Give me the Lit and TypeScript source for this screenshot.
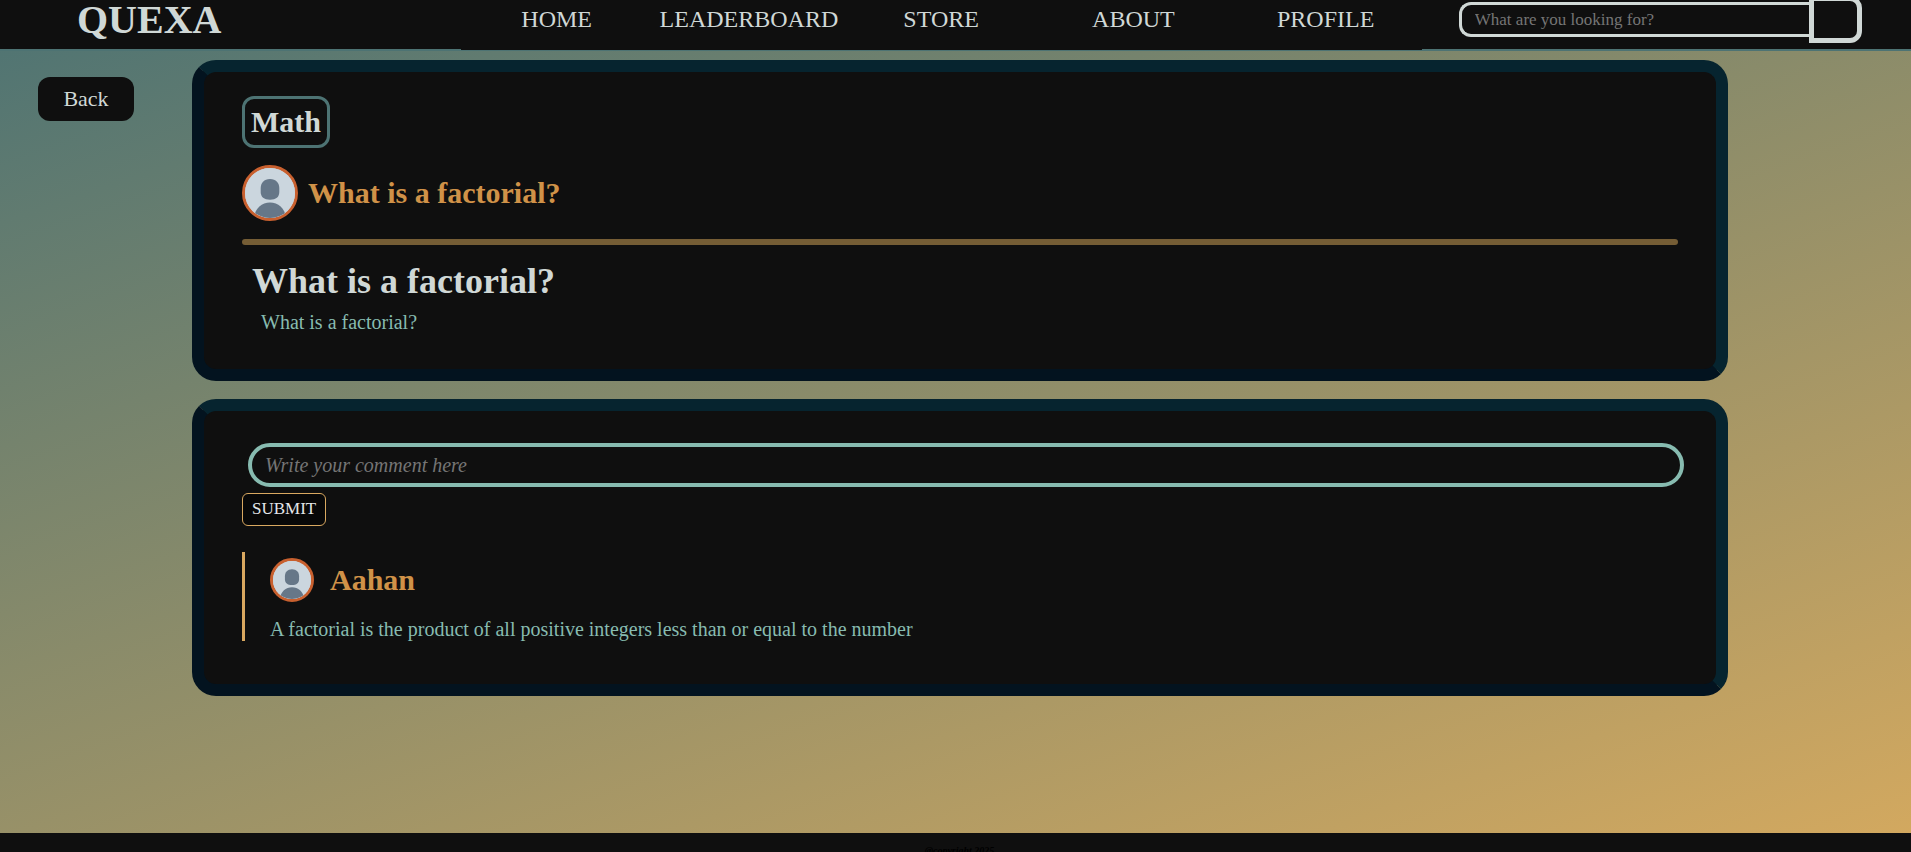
import { LitElement, html, css } from "lit";
import { customElement, property } from "lit/decorators.js";

@customElement("user-avatar")
class UserAvatar extends LitElement {
  static styles = css`
    :host {
      display: block;
      flex: none;
      box-sizing: border-box;
      border: 3px solid #c8602f;
      border-radius: 50%;
      overflow: hidden;
      background: #cbd6de;
    }
    svg {
      display: block;
      width: 100%;
      height: 100%;
    }
  `;

  render() {
    return html`
      <svg viewBox="0 0 50 50" role="img" aria-label="Profile picture">
        <rect width="50" height="50" fill="#cbd6de" />
        <path
          d="M25 11C31 11 34.3 15 34.3 20V24C34.3 29 31 31.7 25 31.7S15.7 29 15.7 24V20C15.7 15 19 11 25 11Z"
          fill="#667788"
        />
        <path d="M9 50C10 40 17 34.5 25 34.5S40 40 41 50Z" fill="#667788" />
      </svg>
    `;
  }
}

@customElement("site-header")
class SiteHeader extends LitElement {
  @property({ attribute: false }) links: string[] = [];

  static styles = css`
    :host {
      display: block;
    }
    .bar {
      display: grid;
      grid-template-columns: 24.1% 50.3% 1fr;
      height: 49px;
      background: #0f0f0f;
      border-bottom: 2px solid #4d7373;
    }
    .logo {
      margin: 0;
      padding-left: 77px;
      font-size: 40px;
      line-height: 40px;
      font-weight: bold;
    }
    .nav {
      display: grid;
      grid-auto-flow: column;
      grid-auto-columns: 1fr;
      height: 50px;
      background: #0f0f0f;
    }
    .link {
      color: inherit;
      text-decoration: none;
      text-align: center;
      font-size: 24px;
      line-height: 38px;
    }
    .search {
      display: flex;
      align-items: center;
      height: 39px;
      padding: 0 49px 0 37px;
    }
    .field {
      flex: 1;
      min-width: 0;
      height: 35px;
      box-sizing: border-box;
      padding: 0 0 0 13px;
      border: 3px solid #d0d8d6;
      border-right: 0;
      border-radius: 12px 0 0 12px;
      background: transparent;
      color: inherit;
      font: 17px/20px "Liberation Serif", serif;
      outline: none;
    }
    .field::placeholder {
      color: #757575;
    }
    .go {
      flex: none;
      width: 53px;
      height: 47px;
      box-sizing: border-box;
      border: 5px solid #d0d8d6;
      border-radius: 0 12px 12px 0;
      background: #0f0f0f;
    }
  `;

  render() {
    return html`
      <header class="bar">
        <h1 class="logo">QUEXA</h1>
        <nav class="nav">
          ${this.links.map((l) => html`<a class="link" href="#">${l}</a>`)}
        </nav>
        <form class="search" role="search">
          <input
            class="field"
            type="text"
            aria-label="Search"
            placeholder="What are you looking for?"
          />
          <button class="go" type="button" aria-label="Search"></button>
        </form>
      </header>
    `;
  }
}

@customElement("app-root")
class AppRoot extends LitElement {
  private links = ["HOME", "LEADERBOARD", "STORE", "ABOUT", "PROFILE"];
  private comments = [
    {
      name: "Aahan",
      text: "A factorial is the product of all positive integers less than or equal to the number",
    },
  ];

  static styles = css`
    :host {
      display: flex;
      flex-direction: column;
      height: 100vh;
      overflow: hidden;
      color: #d0d8d6;
      font-family: "Liberation Serif", "Times New Roman", serif;
      background: linear-gradient(161deg, #4d7373, #d4a95f);
    }
    .page {
      flex: 1;
      min-height: 0;
      display: grid;
      grid-template-columns: 192px minmax(0, 1fr) 183px;
      align-items: start;
    }
    .side {
      padding: 26px 0 0 38px;
    }
    .back {
      width: 96px;
      height: 44px;
      border: 0;
      border-radius: 12px;
      background: #0f0f0f;
      color: inherit;
      font: 22px/24px "Liberation Serif", serif;
    }
    .column {
      display: flex;
      flex-direction: column;
      gap: 18px;
      padding-top: 9px;
    }
    .card {
      padding: 24px 38px 35px;
      border: 12px solid;
      border-color: #06242f #06242f #03131f #03131f;
      border-radius: 24px;
      background: #0f0f0f;
    }
    .subject {
      width: fit-content;
      margin: 0 0 17px;
      padding: 6px;
      border: 3px solid #4d7373;
      border-radius: 12px;
      font-size: 30px;
      line-height: 34px;
    }
    .asker {
      display: flex;
      align-items: center;
      gap: 10px;
    }
    .name {
      margin: 0;
      color: #d09248;
      font-size: 30px;
      line-height: 34px;
    }
    .large {
      width: 56px;
      height: 56px;
    }
    .small {
      width: 44px;
      height: 44px;
    }
    .rule {
      height: 6px;
      margin: 18px 0 16px;
      border: 0;
      border-radius: 3px;
      background: #755d35;
    }
    .title {
      margin: 0 10px 9px;
      font-size: 36px;
      line-height: 40px;
    }
    .text {
      margin: 0;
      color: #87bbb0;
      font-size: 20px;
      line-height: 24px;
    }
    .body {
      padding-left: 19px;
    }
    .discussion {
      padding-top: 32px;
      padding-bottom: 43px;
    }
    .form {
      display: flex;
      flex-direction: column;
      align-items: flex-start;
      gap: 6px;
      margin-bottom: 26px;
    }
    .entry {
      position: relative;
      left: 6px;
      width: 100%;
      height: 44px;
      box-sizing: border-box;
      padding: 0 13px;
      border: 4px solid #87bbb0;
      border-radius: 22px;
      background: transparent;
      color: inherit;
      font: italic 20px/24px "Liberation Serif", serif;
      outline: none;
    }
    .entry::placeholder {
      color: #757575;
    }
    .submit {
      height: 33px;
      padding: 0 9px 2px;
      border: 1px solid #d9a860;
      border-radius: 6px;
      background: #080808;
      color: #e4e6ea;
      font: 17px/20px "Liberation Serif", serif;
    }
    .comment {
      display: flex;
      flex-direction: column;
      gap: 15px;
      padding: 6px 0 0 25px;
      border-left: 3px solid #d9a860;
    }
    .author {
      display: flex;
      align-items: center;
      gap: 16px;
    }
    .footer {
      flex: none;
      height: 19px;
      box-sizing: border-box;
      overflow: hidden;
      padding: 12px 0 0 8px;
      background: #0f0f0f;
      color: #000;
      text-align: center;
      font-size: 10px;
      line-height: 12px;
      font-style: italic;
      font-weight: bold;
    }
  `;

  render() {
    return html`
      <site-header .links=${this.links}></site-header>
      <main class="page">
        <div class="side"><button class="back" type="button">Back</button></div>
        <div class="column">
          <article class="card">
            <h2 class="subject">Math</h2>
            <div class="asker">
              <user-avatar class="large"></user-avatar>
              <h2 class="name">What is a factorial?</h2>
            </div>
            <hr class="rule" />
            <h1 class="title">What is a factorial?</h1>
            <p class="text body">What is a factorial?</p>
          </article>
          <section class="card discussion">
            <form class="form">
              <input
                class="entry"
                type="text"
                aria-label="Comment"
                placeholder="Write your comment here"
              />
              <button class="submit" type="button">SUBMIT</button>
            </form>
            ${this.comments.map(
              (c) => html`
                <article class="comment">
                  <div class="author">
                    <user-avatar class="small"></user-avatar>
                    <h2 class="name">${c.name}</h2>
                  </div>
                  <p class="text">${c.text}</p>
                </article>
              `
            )}
          </section>
        </div>
      </main>
      <footer class="footer">@copyright 2025</footer>
    `;
  }
}
